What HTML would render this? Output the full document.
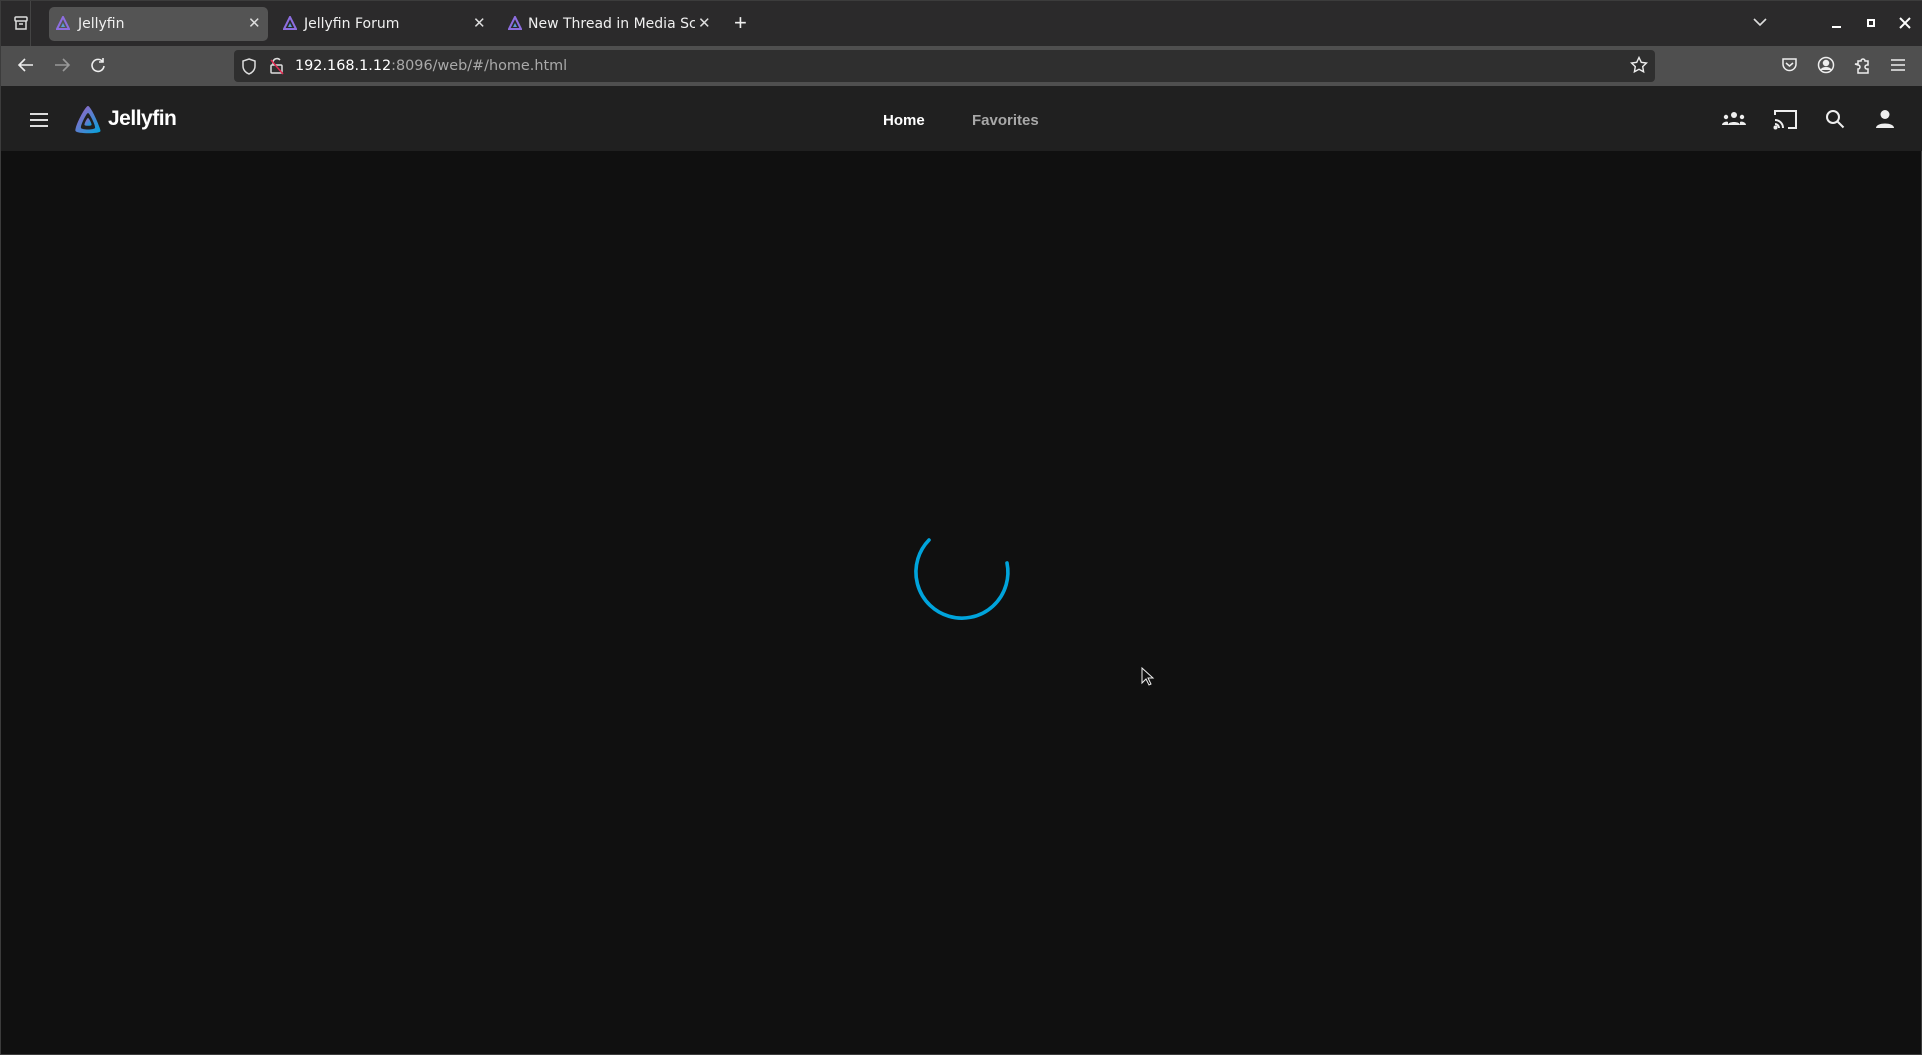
<!DOCTYPE html>
<html><head><meta charset="utf-8"><style>
*{margin:0;padding:0;box-sizing:border-box}
body{width:1922px;height:1055px;background:#101010;font-family:"Liberation Sans","DejaVu Sans",sans-serif;position:relative;overflow:hidden;border:1px solid #3c3c3c}
.abs{position:absolute}
.tabbar{left:0;top:0;width:1922px;height:45px;background:#2b2a2b}
.tab{top:6px;height:34px;border-radius:5px}
.tabtxt{color:#f0f0f0;font-size:14px;top:15px;font-family:"DejaVu Sans",sans-serif}
.x{color:#ddd;font-size:15px;top:13px}
.toolbar{left:0;top:45px;width:1922px;height:40px;background:#4f4f4f}
.url{left:233px;top:49px;width:1421px;height:32px;background:#2f2f2f;border-radius:4px}
.hdr{left:0;top:85px;width:1922px;height:65px;background:#202020}
svg{position:absolute}
</style></head><body>
<div class="abs tabbar"></div>
<div class="abs" style="left:29px;top:0;width:1px;height:45px;background:#444"></div>
<svg style="left:12px;top:14px" width="16" height="16" viewBox="0 0 16 16" fill="none" stroke="#ddd" stroke-width="1.5"><rect x="2" y="2" width="12" height="4" rx="1"/><path d="M3 6v8h10V6M6 9h4"/></svg>
<div class="abs tab" style="left:48px;width:219px;background:#545454"></div>
<svg style="left:55px;top:15px" width="14" height="15" viewBox="0 0 14 15"><path d="M7 1L1 13h12z" fill="none" stroke="#8d6ee0" stroke-width="2"/><path d="M7 7l-2 4h4z" fill="#5a9ad8"/></svg>
<div class="abs tabtxt" style="left:77px">Jellyfin</div>
<div class="abs x" style="left:247px">✕</div>
<svg style="left:282px;top:15px" width="14" height="15" viewBox="0 0 14 15"><path d="M7 1L1 13h12z" fill="none" stroke="#8d6ee0" stroke-width="2"/><path d="M7 7l-2 4h4z" fill="#5a9ad8"/></svg>
<div class="abs tabtxt" style="left:303px">Jellyfin Forum</div>
<div class="abs x" style="left:472px">✕</div>
<svg style="left:507px;top:15px" width="14" height="15" viewBox="0 0 14 15"><path d="M7 1L1 13h12z" fill="none" stroke="#8d6ee0" stroke-width="2"/><path d="M7 7l-2 4h4z" fill="#5a9ad8"/></svg>
<div class="abs tabtxt" style="left:527px;width:167px;overflow:hidden;white-space:nowrap">New Thread in Media Sca</div>
<div class="abs x" style="left:697px">✕</div>
<div class="abs" style="left:733px;top:9px;color:#eee;font-size:22px">+</div>
<svg style="left:1751px;top:16px" width="16" height="10" viewBox="0 0 16 10" fill="none" stroke="#ddd" stroke-width="1.6"><path d="M2 2l6 6 6-6"/></svg>
<div class="abs" style="left:1831px;top:25px;width:9px;height:2px;background:#fff"></div>
<div class="abs" style="left:1866px;top:18px;width:8px;height:8px;border:2px solid #fff"></div>
<svg style="left:1898px;top:16px" width="12" height="12" viewBox="0 0 12 12" stroke="#fff" stroke-width="2"><path d="M1 1l10 10M11 1L1 11"/></svg>

<div class="abs toolbar"></div>
<svg style="left:16px;top:56px" width="18" height="16" viewBox="0 0 18 16" fill="none" stroke="#eee" stroke-width="1.6"><path d="M16 8H3M8 2L2 8l6 6"/></svg>
<svg style="left:52px;top:56px" width="18" height="16" viewBox="0 0 18 16" fill="none" stroke="#999" stroke-width="1.6"><path d="M2 8h13M10 2l6 6-6 6"/></svg>
<svg style="left:88px;top:56px" width="18" height="16" viewBox="0 0 18 16" fill="none" stroke="#eee" stroke-width="1.6"><path d="M14 5A6 6 0 1 0 15 9"/><path d="M14 1v4h-4"/></svg>
<div class="abs url"></div>
<svg style="left:240px;top:57px" width="16" height="17" viewBox="0 0 16 17" fill="none" stroke="#ddd" stroke-width="1.5"><path d="M8 1l6 2v5c0 4-3 7-6 8-3-1-6-4-6-8V3z"/></svg>
<svg style="left:268px;top:56px" width="16" height="18" viewBox="0 0 16 18" fill="none" stroke="#ddd" stroke-width="1.5"><rect x="2" y="8" width="11" height="8" rx="1"/><path d="M4 8V5a4 4 0 0 1 7-2"/><path d="M2 3l12 14" stroke="#e22850"/></svg>
<div class="abs" style="left:294px;top:57px;font-size:14.4px;color:#fff;font-family:'DejaVu Sans',sans-serif">192.168.1.12<span style="color:#aaa">:8096/web/#/home.html</span></div>
<svg style="left:1629px;top:55px" width="18" height="18" viewBox="0 0 18 18" fill="none" stroke="#eee" stroke-width="1.4"><path d="M9 1.5l2.3 4.8 5.2.7-3.8 3.6.9 5.2L9 13.3 4.4 15.8l.9-5.2L1.5 7l5.2-.7z"/></svg>
<svg style="left:1780px;top:56px" width="17" height="16" viewBox="0 0 17 16" fill="none" stroke="#eee" stroke-width="1.5"><path d="M2 2h13v5a6.5 6.5 0 0 1-13 0z"/><path d="M5 6l3.5 3L12 6"/></svg>
<svg style="left:1816px;top:55px" width="18" height="18" viewBox="0 0 18 18" fill="none" stroke="#eee" stroke-width="1.5"><circle cx="9" cy="9" r="7.5"/><circle cx="9" cy="7" r="2.5" fill="#eee"/><path d="M4 14c2-3 8-3 10 0" fill="#eee"/></svg>
<svg style="left:1852px;top:55px" width="18" height="18" viewBox="0 0 18 18" fill="none" stroke="#eee" stroke-width="1.5"><path d="M2 8h3V5h3a2 2 0 1 1 4 0h3v4h-1a2 2 0 1 0 0 4h1v4H5v-4a2 2 0 1 0 0-4z"/></svg>
<svg style="left:1889px;top:57px" width="16" height="14" viewBox="0 0 16 14" stroke="#eee" stroke-width="1.5"><path d="M1 2h14M1 7h14M1 12h14"/></svg>

<div class="abs hdr"></div>
<svg style="left:28px;top:111px" width="20" height="16" viewBox="0 0 20 16" stroke="#ddd" stroke-width="2"><path d="M1 2h18M1 8h18M1 14h18"/></svg>
<svg style="left:71px;top:103px" width="32" height="32" viewBox="0 0 32 32"><defs><linearGradient id="g" x1="0" y1="0" x2="1" y2="1"><stop offset="0" stop-color="#aa5cc3"/><stop offset="1" stop-color="#00a4dc"/></linearGradient></defs><path d="M16 2C13 2 2 24 3.5 27S28.5 30 28.5 27 19 2 16 2z M16 9c1.5 0 8 13 7 15s-13 2-14 0S14.5 9 16 9z" fill="url(#g)" fill-rule="evenodd"/><path d="M16 14c-1 0-4 6-3.5 7s6.5 1 7 0S17 14 16 14z" fill="url(#g)"/></svg>
<div class="abs" style="left:107px;top:106px;color:#fff;font-size:21px;font-weight:bold;letter-spacing:-0.5px">Jellyfin</div>
<div class="abs" style="left:882px;top:111px;color:#fff;font-size:15px;font-weight:bold">Home</div>
<div class="abs" style="left:971px;top:111px;color:#a8a8a8;font-size:15px;font-weight:bold">Favorites</div>
<svg style="left:1720px;top:110px" width="26" height="16" viewBox="0 0 26 16" fill="#eee"><circle cx="13" cy="4" r="3"/><circle cx="5" cy="6" r="2.2"/><circle cx="21" cy="6" r="2.2"/><path d="M7 14c0-4 12-4 12 0z M1 14c0-3 5-4 6-3v3z M25 14c0-3-5-4-6-3v3z"/></svg>
<svg style="left:1772px;top:108px" width="25" height="21" viewBox="0 0 25 21" fill="none" stroke="#eee" stroke-width="2"><path d="M2 6V2h21v17h-8"/><path d="M2 11a8 8 0 0 1 8 8M2 15a4 4 0 0 1 4 4"/><circle cx="2.5" cy="18.5" r="1" fill="#eee"/></svg>
<svg style="left:1824px;top:108px" width="20" height="20" viewBox="0 0 20 20" fill="none" stroke="#eee" stroke-width="2"><circle cx="8" cy="8" r="6"/><path d="M12.5 12.5l6 6"/></svg>
<svg style="left:1874px;top:108px" width="20" height="20" viewBox="0 0 20 20" fill="#eee"><circle cx="10" cy="5.5" r="4.5"/><path d="M1 19c0-6 18-6 18 0z"/></svg>

<svg style="left:900px;top:508px" width="130" height="130" viewBox="0 0 130 130"><path d="M28 31 A46 46 0 1 0 106 54" fill="none" stroke="#00a4dc" stroke-width="3.6" stroke-linecap="round"/></svg>
<svg style="left:1140px;top:666px" width="14" height="20" viewBox="0 0 14 20"><path d="M1 1v15l4-4 3 6 2-1-3-6h5z" fill="#111" stroke="#eee" stroke-width="1"/></svg>
</body></html>
